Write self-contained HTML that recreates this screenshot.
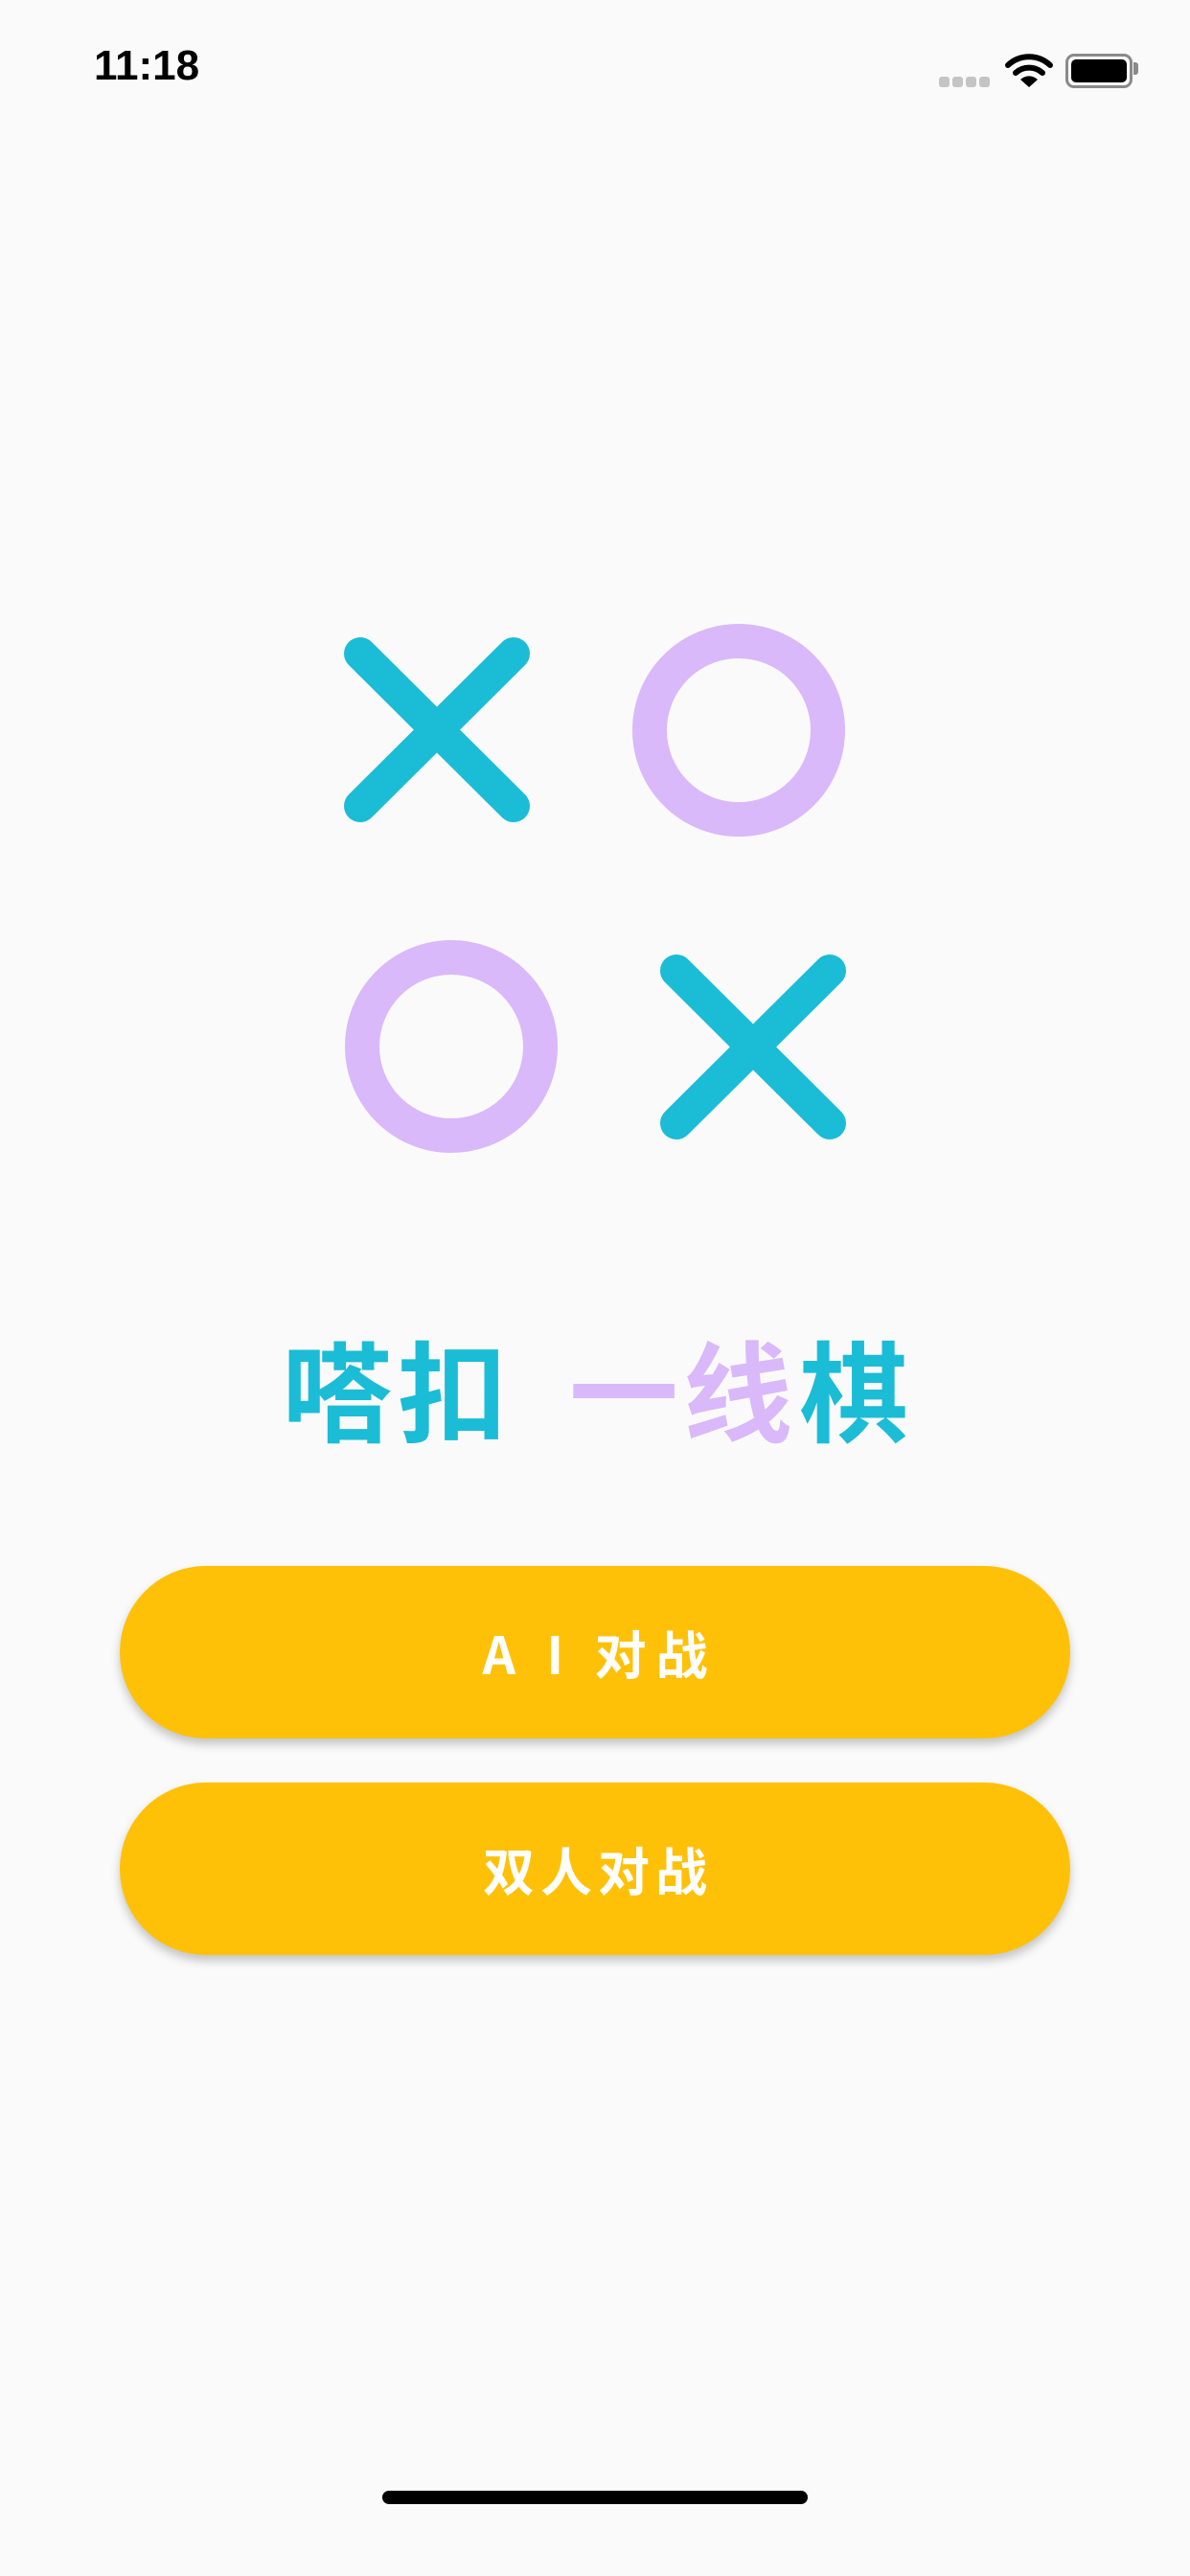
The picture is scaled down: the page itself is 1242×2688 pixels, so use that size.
<!DOCTYPE html>
<html><head><meta charset="utf-8"><style>
html,body{margin:0;padding:0}
body{width:1242px;height:2688px;background:#fafafa;position:relative;overflow:hidden;font-family:"Liberation Sans","Noto Sans CJK SC",sans-serif}
.time{position:absolute;left:98px;top:44px;font-size:44px;font-weight:bold;color:#000}
.dot{position:absolute;top:80px;width:11px;height:11px;border-radius:3px;background:#c4c4c4}
.bat{position:absolute;left:1112px;top:56px;width:64px;height:30px;border:3px solid #8a8a8a;border-radius:9px;}
.bat i{position:absolute;left:3px;top:3px;right:3px;bottom:3px;background:#000;border-radius:5px}
.nub{position:absolute;left:1183px;top:65px;width:5px;height:13px;background:#8a8a8a;border-radius:0 3px 3px 0}
.c{position:absolute;top:1374px;width:120px;text-align:center;font-size:114px;font-weight:bold;font-family:"Noto Sans CJK SC",sans-serif;line-height:146px}
.t{color:#1bbcd6}.p{color:#d9b9f9}
.btn{position:absolute;left:125px;width:992px;height:180px;border-radius:90px;background:#ffc107;box-shadow:0 6px 10px rgba(0,0,0,0.22);color:#fff;text-align:center;line-height:180px;font-size:54px;font-weight:bold;font-family:"Noto Sans CJK SC",sans-serif}
.home{position:absolute;left:399px;top:2599px;width:444px;height:14px;border-radius:7px;background:#000}
</style></head><body>
<div class="time">11:18</div>
<div class="dot" style="left:980px"></div><div class="dot" style="left:994px"></div><div class="dot" style="left:1008px"></div><div class="dot" style="left:1022px"></div>
<svg style="position:absolute;left:1048px;top:54px" width="52" height="40" viewBox="0 0 52 40">
<path d="M4 14 A32 32 0 0 1 48 14" stroke="#000" stroke-width="6" fill="none" stroke-linecap="round"/>
<path d="M12 22 A21 21 0 0 1 40 22" stroke="#000" stroke-width="6" fill="none" stroke-linecap="round"/>
<path d="M26 37 L17 29 A13 13 0 0 1 35 29 Z" fill="#000"/>
</svg>
<div class="bat"><i></i></div><div class="nub"></div>
<svg style="position:absolute;left:0;top:0" width="1242" height="1300">
<g stroke="#1bbcd6" stroke-width="34" stroke-linecap="round">
<line x1="376" y1="682" x2="536" y2="841"/><line x1="536" y1="682" x2="376" y2="841"/>
<line x1="706" y1="1013" x2="866" y2="1172"/><line x1="866" y1="1013" x2="706" y2="1172"/>
</g>
<g stroke="#d9b9f9" stroke-width="36" fill="none">
<circle cx="771" cy="762" r="93"/>
<circle cx="471" cy="1092" r="93"/>
</g>
</svg>
<div class="c t" style="left:292px">嗒</div>
<div class="c t" style="left:412px">扣</div>
<div class="c p" style="left:591px">一</div>
<div class="c p" style="left:710px">线</div>
<div class="c t" style="left:831px">棋</div>
<div class="btn" style="top:1634px;letter-spacing:10px;text-indent:10px">A I 对战</div>
<div class="btn" style="top:1860px;letter-spacing:6px;text-indent:6px">双人对战</div>
<div class="home"></div>
</body></html>
